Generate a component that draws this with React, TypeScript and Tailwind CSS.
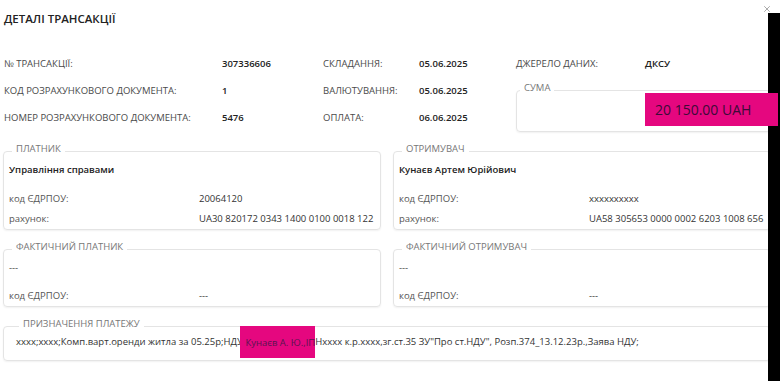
import React from "react";
import { X } from "lucide-react";

type Cell = { label: string; value: string };

const rows: Cell[][] = [
  [
    { label: "№ ТРАНСАКЦІЇ:", value: "307336606" },
    { label: "СКЛАДАННЯ:", value: "05.06.2025" },
    { label: "ДЖЕРЕЛО ДАНИХ:", value: "ДКСУ" },
  ],
  [
    { label: "КОД РОЗРАХУНКОВОГО ДОКУМЕНТА:", value: "1" },
    { label: "ВАЛЮТУВАННЯ:", value: "05.06.2025" },
  ],
  [
    { label: "НОМЕР РОЗРАХУНКОВОГО ДОКУМЕНТА:", value: "5476" },
    { label: "ОПЛАТА:", value: "06.06.2025" },
  ],
];

const Box: React.FC<{ title: string; className?: string; children?: React.ReactNode }> = ({
  title,
  className = "",
  children,
}) => (
  <fieldset
    className={`min-w-0 rounded-[4px] border border-[#e4e4e4] shadow-[0_1px_2px_rgba(0,0,0,0.06)] ${className}`}
  >
    <legend className="ml-[3px] px-[4px] pb-[5px] text-[9.5px] leading-[12px] text-[#777]">
      {title}
    </legend>
    {children}
  </fieldset>
);

const Line: React.FC<{ label: string; value: string }> = ({ label, value }) => (
  <div className="flex leading-[20px]">
    <span className="w-[190px] shrink-0 text-[#555]">{label}</span>
    <span className="whitespace-nowrap text-[#333]">{value}</span>
  </div>
);

const Party: React.FC<{ title: string; name: string; code: string; account?: string }> = ({
  title,
  name,
  code,
  account,
}) => (
  <Box title={title} className="pl-[5px]">
    <div className={`leading-[20px] ${account ? "font-semibold text-[#222]" : "text-[#444]"}`}>
      {name}
    </div>
    <div className={account ? "mt-[9px]" : "mt-[8px]"}>
      <Line label="код ЄДРПОУ:" value={code} />
      {account && <Line label="рахунок:" value={account} />}
    </div>
  </Box>
);

export default function App() {
  return (
    <div className="relative h-[381px] w-[780px] overflow-hidden bg-white font-['Open_Sans',sans-serif] text-[9.5px] text-[#333]">
      <div className="w-[774px] px-[3px]">
        <h2 className="pl-[1px] pt-[12px] text-[11.5px] font-semibold leading-[14px] text-[#222]">
          ДЕТАЛІ ТРАНСАКЦІЇ
        </h2>

        <div className="mt-[24.5px] grid grid-cols-[218px_101px_96px_97px_129px_1fr] grid-rows-[27px_27px_27px] items-center pl-[1px]">
          {rows.map((row, i) => (
            <React.Fragment key={i}>
              {row.map((c) => (
                <React.Fragment key={c.label}>
                  <span className="whitespace-nowrap text-[#4a4a4a]">{c.label}</span>
                  <span className="font-semibold text-[#222]">{c.value}</span>
                </React.Fragment>
              ))}
              {i === 1 && (
                <div className="col-span-2 col-start-5 row-span-2 row-start-2 mt-[4px] self-start">
                  <Box title="СУМА">
                    <div className="h-[32px]" />
                  </Box>
                </div>
              )}
            </React.Fragment>
          ))}
        </div>

        <div className="mt-[11.5px] grid grid-cols-2 gap-x-[12px] gap-y-[11px]">
          <Party
            title="ПЛАТНИК"
            name="Управління справами"
            code="20064120"
            account="UA30 820172 0343 1400 0100 0018 122"
          />
          <Party
            title="ОТРИМУВАЧ"
            name="Кунаєв Артем Юрійович"
            code="xxxxxxxxxx"
            account="UA58 305653 0000 0002 6203 1008 656"
          />
          <Party title="ФАКТИЧНИЙ ПЛАТНИК" name="---" code="---" />
          <Party title="ФАКТИЧНИЙ ОТРИМУВАЧ" name="---" code="---" />
        </div>

        <Box title="ПРИЗНАЧЕННЯ ПЛАТЕЖУ" className="mt-[11px] pb-[11px] pl-[12px]">
          <div className="whitespace-nowrap leading-[14px] text-[#333]">
            xxxx;xxxx;Комп.варт.оренди житла за 05.25р;НДУ
            <span className="bg-[#e5077f] py-[9.5px] text-[#5a1450] shadow-[-3px_0_0_0_#e5077f]">
              {" "}Кунаєв А. Ю.,ІП
            </span>
            Нxxxx к.р.xxxx,зг.ст.35 ЗУ"Про ст.НДУ", Розп.374_13.12.23р.,Заява НДУ;
          </div>
        </Box>
      </div>

      <button className="absolute left-[762px] top-[4px] text-[#777]">
        <X size={10} strokeWidth={1.5} />
      </button>
      <div className="absolute bottom-0 right-0 top-[13px] w-[12px] bg-black" />
      {/* highlight pasted over the amount */}
      <div className="absolute left-[645px] top-[93px] h-[33px] w-[133px] bg-[#e5077f] pl-[10px] text-[14px] leading-[33px] text-[#3d0b38]">
        20 150.00 UAH
      </div>
    </div>
  );
}
